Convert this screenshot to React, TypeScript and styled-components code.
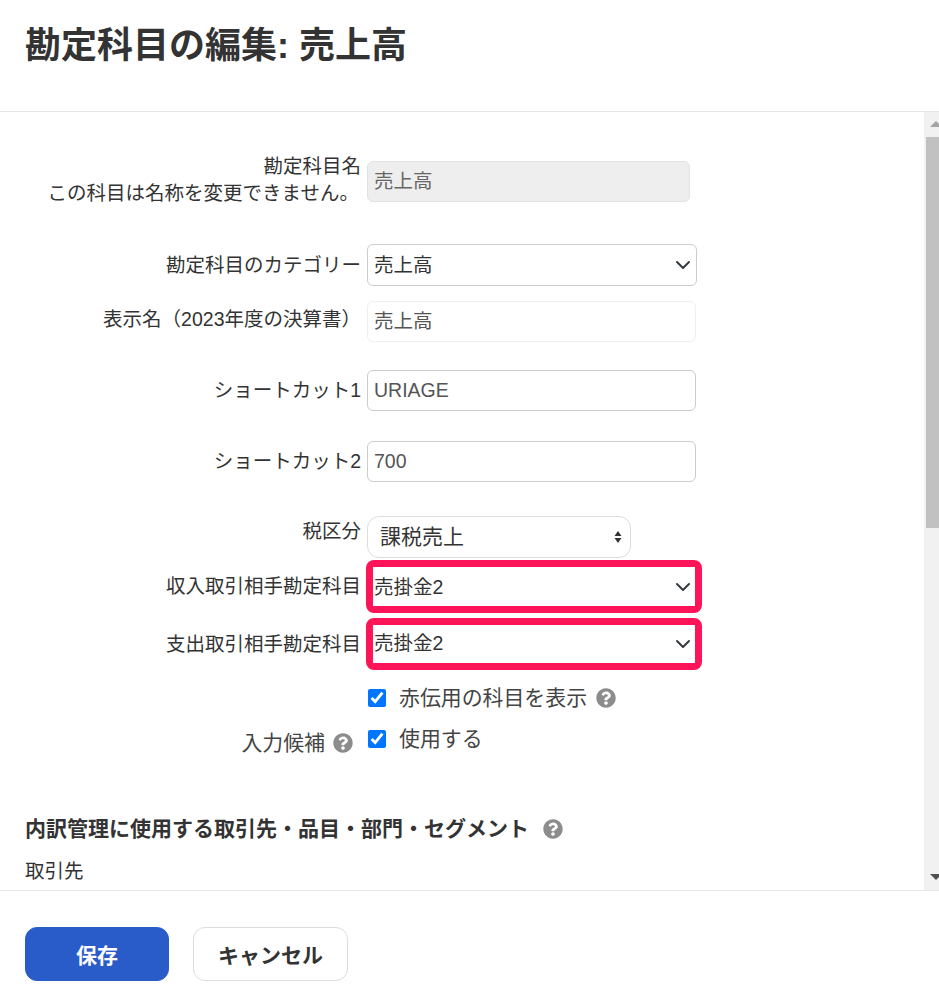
import React from 'react';
import styled, { createGlobalStyle } from 'styled-components';
import { FaQuestionCircle } from 'react-icons/fa';

const GlobalStyle = createGlobalStyle`
  html, body {
    margin: 0;
    padding: 0;
    background: #fff;
  }
  body {
    font-family: "Liberation Sans", "Noto Sans CJK JP", sans-serif;
    color: #333;
    overflow: hidden;
  }
`;

const Modal = styled.div`
  width: 939px;
  height: 1006px;
  display: flex;
  flex-direction: column;
`;

const Header = styled.header`
  padding: 19px 0 0 25px;
  height: 92px;
  border-bottom: 1px solid #e6e6e6;
`;

const Title = styled.h1`
  margin: 0;
  font-size: 36px;
  line-height: 54px;
  font-weight: 700;
  color: #333;
`;

const Body = styled.div`
  height: 778px;
  display: flex;
  overflow: hidden;
`;

const Content = styled.main`
  flex: 1;
  padding-top: 41px;
  overflow: hidden;
`;

const Track = styled.div`
  width: 15px;
  display: flex;
  flex-direction: column;
  align-items: flex-end;
  background: #f1f1f1;
`;

const ArrowSlot = styled.div<{ $height: number }>`
  height: ${p => p.$height}px;
  width: 100%;
  display: flex;
  align-items: center;
  justify-content: flex-end;
`;

const Thumb = styled.div`
  width: 13px;
  height: 391px;
  background: #c1c1c1;
`;

const Spacer = styled.div`
  flex: 1;
`;

const Row = styled.div<{ $top?: number; $start?: boolean }>`
  display: grid;
  grid-template-columns: 361px auto;
  column-gap: 6px;
  align-items: ${p => (p.$start ? 'start' : 'center')};
  justify-content: start;
  margin-top: ${p => p.$top ?? 0}px;
`;

const Label = styled.label<{ $below?: number }>`
  text-align: right;
  font-size: 19.5px;
  line-height: 27px;
  white-space: nowrap;
  padding-bottom: ${p => p.$below ?? 0}px;
`;

const LabelNote = styled.span`
  display: block;
  padding-right: 2px;
`;

const HintLabel = styled.label`
  display: flex;
  justify-content: flex-end;
  align-items: center;
  padding: 4px 8px 0 0;
  font-size: 20.9px;
  line-height: 27px;
  color: #444;
`;

const Input = styled.input<{ $width: number; $faint?: boolean; $cjk?: boolean }>`
  width: ${p => p.$width}px;
  height: 41px;
  box-sizing: border-box;
  padding: 0 6px ${p => (p.$cjk ? 5 : 0)}px;
  font: inherit;
  font-size: 19.5px;
  color: #555;
  background: #fff;
  border: 1px solid ${p => (p.$faint ? '#efefef' : '#ccc')};
  border-radius: 6px;
  outline: none;

  &:disabled {
    margin-top: 3px;
    background: #eee;
    border-color: #e2e2e2;
    color: #666;
    opacity: 1;
  }
`;

const SelectWrap = styled.div<{ $width: number; $flagged?: boolean }>`
  position: relative;
  width: ${p => p.$width}px;
  box-sizing: border-box;
  ${p => p.$flagged && `
    margin-left: -1px;
    border: 7px solid #ff1459;
    border-radius: 8px;
  `}
`;

const NativeSelect = styled.select<{ $height: number; $pad: number; $radius: number; $border: string; $size?: number; $lift?: number }>`
  display: block;
  width: 100%;
  height: ${p => p.$height}px;
  box-sizing: border-box;
  appearance: none;
  padding: 0 24px ${p => p.$lift ?? 0}px ${p => p.$pad}px;
  font-family: inherit;
  font-size: ${p => p.$size ?? 19.5}px;
  color: #333;
  background: #fff;
  border: ${p => p.$border};
  border-radius: ${p => p.$radius}px;
  outline: none;
`;

const SelectIcon = styled.svg<{ $right: number }>`
  position: absolute;
  top: 50%;
  right: ${p => p.$right}px;
  transform: translateY(-50%);
  pointer-events: none;
`;

const CheckLine = styled.label`
  display: flex;
  align-items: center;
  height: 27px;
  font-size: 20.9px;
  line-height: 27px;
  color: #444;
`;

const Check = styled.input`
  width: 18px;
  height: 18px;
  margin: 0 13px 0 1px;
  accent-color: #0075ff;
`;

const Help = styled(FaQuestionCircle)<{ $gap: number }>`
  width: 20px;
  height: 20px;
  color: #8c8c8c;
  margin-left: ${p => p.$gap}px;
  flex: none;
`;

const Section = styled.h2`
  display: flex;
  align-items: center;
  margin: 58px 0 0 25px;
  font-size: 21px;
  line-height: 30px;
  font-weight: 700;
  color: #333;
`;

const SectionItem = styled.div`
  margin: 14px 0 0 25px;
  font-size: 19.5px;
  line-height: 27px;
`;

const Footer = styled.footer`
  flex: 1;
  display: flex;
  align-items: flex-start;
  gap: 24px;
  padding: 36px 0 0 25px;
  border-top: 1px solid #e6e6e6;
`;

const Button = styled.button<{ $primary?: boolean; $width: number }>`
  width: ${p => p.$width}px;
  height: 54px;
  font-family: inherit;
  font-size: 21px;
  font-weight: 700;
  border-radius: 12px;
  color: ${p => (p.$primary ? '#fff' : '#333')};
  background: ${p => (p.$primary ? '#2a5cc9' : '#fff')};
  border: 1px solid ${p => (p.$primary ? '#2a5cc9' : '#ddd')};
`;

const Chevron: React.FC<{ right: number }> = ({ right }) => (
  <SelectIcon $right={right} width="16" height="12" viewBox="0 0 16 12" fill="none">
    <path d="M2 3 L8 9 L14 3" stroke="#343a40" strokeWidth="2" strokeLinecap="round" strokeLinejoin="round" />
  </SelectIcon>
);

const UpDown: React.FC = () => (
  <SelectIcon $right={9} width="8" height="14" viewBox="0 0 8 14">
    <path d="M4 1 L7.5 6 H0.5 Z M0.5 8 H7.5 L4 13 Z" fill="#333" />
  </SelectIcon>
);

const FlaggedSelect: React.FC<{ value: string; height: number; lift?: number }> = ({ value, height, lift }) => (
  <SelectWrap $width={336} $flagged>
    <NativeSelect $height={height} $pad={1} $radius={0} $border="none" $lift={lift} defaultValue={value}>
      <option>{value}</option>
    </NativeSelect>
    <Chevron right={4} />
  </SelectWrap>
);

const App: React.FC = () => {
  return (
    <>
      <GlobalStyle />
      <Modal>
        <Header>
          <Title>勘定科目の編集: 売上高</Title>
        </Header>
        <Body>
          <Content>
            <Row>
              <Label>
                勘定科目名
                <LabelNote>この科目は名称を変更できません。</LabelNote>
              </Label>
              <Input $width={323} $cjk disabled defaultValue="売上高" />
            </Row>
            <Row $top={37}>
              <Label>勘定科目のカテゴリー</Label>
              <SelectWrap $width={330}>
                <NativeSelect $height={42} $pad={6} $radius={6} $border="1px solid #ccc" defaultValue="売上高">
                  <option>売上高</option>
                </NativeSelect>
                <Chevron right={6} />
              </SelectWrap>
            </Row>
            <Row $top={15}>
              <Label $below={4}>表示名（2023年度の決算書）</Label>
              <Input $width={329} $faint $cjk defaultValue="売上高" />
            </Row>
            <Row $top={28}>
              <Label>ショートカット1</Label>
              <Input $width={329} defaultValue="URIAGE" />
            </Row>
            <Row $top={30}>
              <Label>ショートカット2</Label>
              <Input $width={329} defaultValue="700" />
            </Row>
            <Row $top={34}>
              <Label $below={12}>税区分</Label>
              <SelectWrap $width={264}>
                <NativeSelect $height={42} $pad={12} $radius={12} $size={21} $lift={2} $border="1px solid #ddd" defaultValue="課税売上">
                  <option>課税売上</option>
                </NativeSelect>
                <UpDown />
              </SelectWrap>
            </Row>
            <Row $top={2}>
              <Label>収入取引相手勘定科目</Label>
              <FlaggedSelect value="売掛金2" height={39} />
            </Row>
            <Row $top={5}>
              <Label>支出取引相手勘定科目</Label>
              <FlaggedSelect value="売掛金2" height={38} lift={2} />
            </Row>
            <Row $top={14}>
              <span />
              <CheckLine>
                <Check type="checkbox" defaultChecked />
                赤伝用の科目を表示
                <Help $gap={9} />
              </CheckLine>
            </Row>
            <Row $top={14} $start>
              <HintLabel>
                入力候補
                <Help $gap={8} />
              </HintLabel>
              <CheckLine>
                <Check type="checkbox" defaultChecked />
                使用する
              </CheckLine>
            </Row>
            <Section>
              内訳管理に使用する取引先・品目・部門・セグメント
              <Help $gap={14} />
            </Section>
            <SectionItem>取引先</SectionItem>
          </Content>
          <Track>
            <ArrowSlot $height={25}>
              <svg width="9" height="7" viewBox="0 0 9 7">
                <path d="M0 6 L6 0 L12 6 Z" fill="#a3a3a3" />
              </svg>
            </ArrowSlot>
            <Thumb />
            <Spacer />
            <ArrowSlot $height={25}>
              <svg width="9" height="7" viewBox="0 0 9 7">
                <path d="M0 0 H12 L6 6 Z" fill="#505050" />
              </svg>
            </ArrowSlot>
          </Track>
        </Body>
        <Footer>
          <Button $primary $width={144}>保存</Button>
          <Button $width={155}>キャンセル</Button>
        </Footer>
      </Modal>
    </>
  );
};

export default App;
